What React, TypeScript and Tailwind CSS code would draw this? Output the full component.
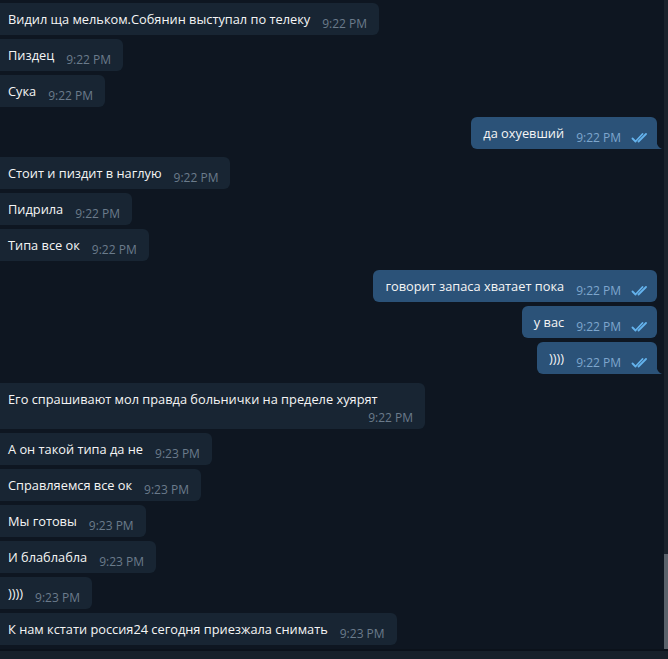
import React from "react";

type Msg = {
  text: string;
  time: string;
  out?: boolean;
  tail?: boolean;
  wrap?: boolean;
  gap?: string;
};

const messages: Msg[] = [
  { text: "Видил ща мельком.Собянин выступал по телеку", time: "9:22 PM", gap: "mt-[3px]" },
  { text: "Пиздец", time: "9:22 PM" },
  { text: "Сука", time: "9:22 PM" },
  { text: "да охуевший", time: "9:22 PM", out: true, tail: true, gap: "mt-[10px]" },
  { text: "Стоит и пиздит в наглую", time: "9:22 PM", gap: "mt-[8px]" },
  { text: "Пидрила", time: "9:22 PM" },
  { text: "Типа все ок", time: "9:22 PM" },
  { text: "говорит запаса хватает пока", time: "9:22 PM", out: true, gap: "mt-[9px]" },
  { text: "у вас", time: "9:22 PM", out: true },
  { text: "))))", time: "9:22 PM", out: true, tail: true },
  { text: "Его спрашивают мол правда больнички на пределе хуярят", time: "9:22 PM", wrap: true, gap: "mt-[9px]" },
  { text: "А он такой типа да не", time: "9:23 PM" },
  { text: "Справляемся все ок", time: "9:23 PM" },
  { text: "Мы готовы", time: "9:23 PM" },
  { text: "И блаблабла", time: "9:23 PM" },
  { text: "))))", time: "9:23 PM" },
  { text: "К нам кстати россия24 сегодня приезжала снимать", time: "9:23 PM" },
];

const Checks = () => (
  <svg width="17" height="10" viewBox="0 0 17 10" fill="none" className="ml-[10px] mt-[16px] shrink-0">
    <path d="M1.5 5.5 L4.5 8.5 L11.5 1" stroke="#64b3ed" strokeWidth="1.8" strokeLinecap="round" strokeLinejoin="round" />
    <path d="M7.5 8.5 L15 1" stroke="#64b3ed" strokeWidth="1.8" strokeLinecap="round" strokeLinejoin="round" />
  </svg>
);

const Bubble: React.FC<{ m: Msg }> = ({ m }) => {
  if (m.wrap) {
    return (
      <div className={`${m.gap ?? "mt-1"} flex`}>
        <div className="-ml-1 flex h-[46px] w-[429px] flex-col rounded-r-md bg-[#182533] pl-3 pr-3">
          <span className="mt-[7px] text-[12.8px] leading-[18px] text-[#f5f5f5]">{m.text}</span>
          <span className="mt-[3px] self-end text-[12px] leading-[14px] text-[#6b7b8b]">{m.time}</span>
        </div>
      </div>
    );
  }
  if (m.out) {
    return (
      <div className={`${m.gap ?? "mt-1"} flex justify-end`}>
        <div
          className={`relative flex h-8 rounded-md bg-[#2b5278] pl-3 pr-[9px] ${
            m.tail ? "rounded-br-none" : ""
          }`}
        >
          <span className="mt-[7px] text-[12.8px] leading-[18px] text-[#f5f5f5]">{m.text}</span>
          <span className="ml-3 mt-[14px] text-[12px] leading-[14px] text-[#7ea6cd]">{m.time}</span>
          <Checks />
          {m.tail && (
            <svg width="6" height="10" viewBox="0 0 6 10" className="absolute bottom-0 right-[-5px]">
              <path d="M0 0 C0.5 5 2 8.5 6 10 L0 10 Z" fill="#2b5278" />
            </svg>
          )}
        </div>
      </div>
    );
  }
  return (
    <div className={`${m.gap ?? "mt-1"} flex`}>
      <div className="-ml-1 flex h-8 rounded-r-md bg-[#182533] pl-3 pr-3">
        <span className="mt-[7px] text-[12.8px] leading-[18px] text-[#f5f5f5]">{m.text}</span>
        <span className="ml-3 mt-[14px] text-[12px] leading-[14px] text-[#6b7b8b]">{m.time}</span>
      </div>
    </div>
  );
};

export default function App() {
  return (
    <div
      className="flex h-[659px] w-[668px] flex-col overflow-hidden bg-[#0e1621]"
      style={{ fontFamily: '"Open Sans", "Noto Sans", sans-serif' }}
    >
      <div className="flex min-h-0 flex-1">
        <div className="flex flex-1 flex-col pr-[7px]">
          {messages.map((m, i) => (
            <Bubble key={i} m={m} />
          ))}
        </div>
        <div className="flex w-[4px] flex-col bg-[#1a222c]">
          <div className="flex-1" />
          <div className="h-[95px] bg-[#5a626b]" />
        </div>
      </div>
      <div className="h-[2px] bg-[#0b121b]" />
      <div className="h-[8px] bg-[#17212b]" />
    </div>
  );
}
